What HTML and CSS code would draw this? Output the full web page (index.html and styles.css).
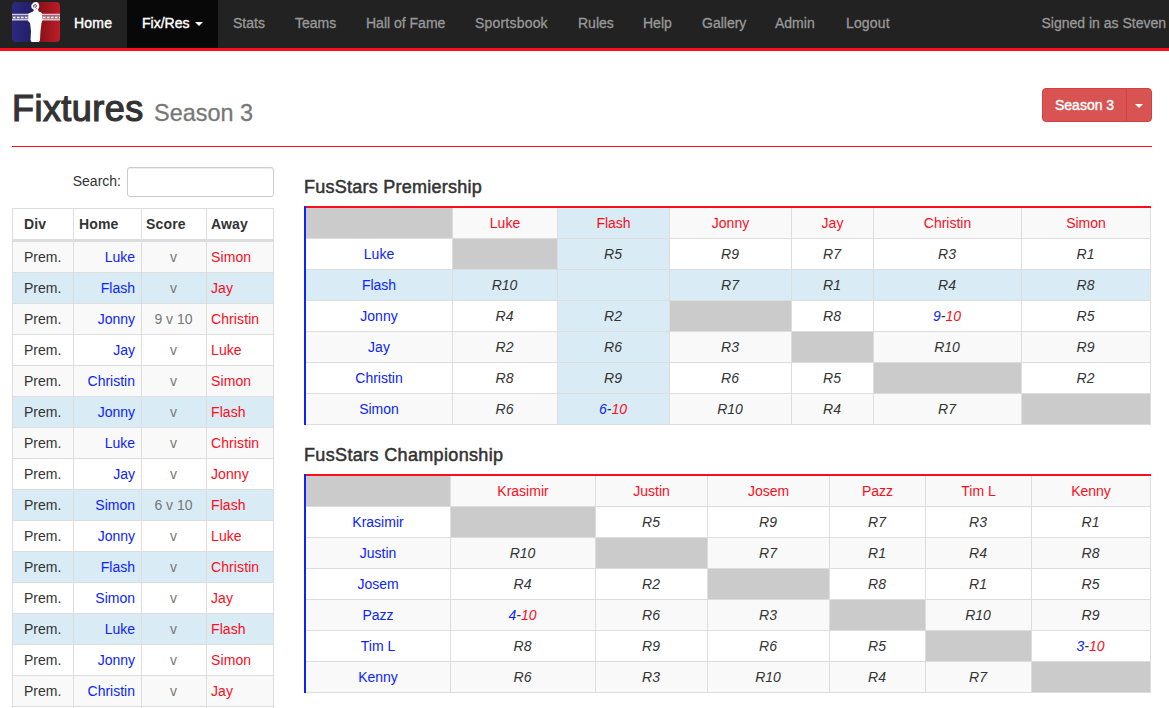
FILE: index.html
```
<!DOCTYPE html>
<html lang="en">
<head>
<meta charset="utf-8">
<title>Fixtures</title>
<link rel="stylesheet" href="styles.css">
</head>
<body>
<nav class="navbar">
  <a class="brand"><svg width="48" height="40" viewBox="0 0 48 40">
    <defs>
      <linearGradient id="b" x1="0" x2="1"><stop offset="0" stop-color="#2c2a80"/><stop offset="1" stop-color="#211c5e"/></linearGradient>
      <linearGradient id="r" x1="0" x2="1"><stop offset="0" stop-color="#801015"/><stop offset="1" stop-color="#bd1c28"/></linearGradient>
      <clipPath id="c"><rect width="48" height="40" rx="4"/></clipPath>
    </defs>
    <g clip-path="url(#c)">
      <rect width="24" height="40" fill="url(#b)"/><rect x="24" width="24" height="40" fill="url(#r)"/>
      <path d="M0 12.5H48M0 17.700H48" stroke="#d3c6da" stroke-width="1.400"/>
      <path d="M0 13.200H20V17H0Z" fill="#6b689f"/><path d="M28 13.200H48V17H28Z" fill="#bd6b74"/>
      <path d="M1 15.500H18M31 15.500H48" stroke="#fff" stroke-width="1.500" stroke-dasharray="2.500 1.500"/>
      <path d="M19.500 40L18.500 38 19 29 18 21 16 19 16.500 11.500 21 9.500 22 8 19.500 6 19.300 3 21.500 .5 25 0 27 2 27.300 5 26 7.500 26.500 9.200 30 11 30.500 18 29.500 21 28.500 29 28 38 27 40Z" fill="#fff"/>
      <path d="M22 5.500L21.500 3.500 23.500 2.500 24.500 4 23.500 5.500 24.500 6.500" stroke="#44305f" stroke-width="1" fill="none"/>
    </g></svg></a>
  <a class="item home">Home</a>
  <a class="item active">Fix/Res<span class="caret"></span></a>
  <a class="item stats">Stats</a>
  <a class="item teams">Teams</a>
  <a class="item fame">Hall of Fame</a>
  <a class="item book">Sportsbook</a>
  <a class="item rules">Rules</a>
  <a class="item help">Help</a>
  <a class="item gallery">Gallery</a>
  <a class="item admin">Admin</a>
  <a class="item logout">Logout</a>
  <span class="signed">Signed in as Steven</span>
</nav>
<main class="page">
  <header class="page-header">
    <h1>Fixtures <small>Season 3</small></h1>
    <div class="btn-group"><span class="btn">Season 3</span><span class="btn toggle"><span class="caret"></span></span></div>
  </header>
  <div class="columns">
    <section class="list">
      <div class="filter"><label for="q">Search:</label><input id="q" type="text"></div>
      <table class="fixtures">
        <colgroup><col class="w-div"><col class="w-home"><col class="w-score"><col class="w-away"></colgroup>
        <thead><tr><th>Div</th><th>Home</th><th>Score</th><th>Away</th></tr></thead>
        <tbody>
          <tr><td>Prem.</td><td>Luke</td><td>v</td><td>Simon</td></tr>
          <tr class="info"><td>Prem.</td><td>Flash</td><td>v</td><td>Jay</td></tr>
          <tr><td>Prem.</td><td>Jonny</td><td>9 v 10</td><td>Christin</td></tr>
          <tr><td>Prem.</td><td>Jay</td><td>v</td><td>Luke</td></tr>
          <tr><td>Prem.</td><td>Christin</td><td>v</td><td>Simon</td></tr>
          <tr class="info"><td>Prem.</td><td>Jonny</td><td>v</td><td>Flash</td></tr>
          <tr><td>Prem.</td><td>Luke</td><td>v</td><td>Christin</td></tr>
          <tr><td>Prem.</td><td>Jay</td><td>v</td><td>Jonny</td></tr>
          <tr class="info"><td>Prem.</td><td>Simon</td><td>6 v 10</td><td>Flash</td></tr>
          <tr><td>Prem.</td><td>Jonny</td><td>v</td><td>Luke</td></tr>
          <tr class="info"><td>Prem.</td><td>Flash</td><td>v</td><td>Christin</td></tr>
          <tr><td>Prem.</td><td>Simon</td><td>v</td><td>Jay</td></tr>
          <tr class="info"><td>Prem.</td><td>Luke</td><td>v</td><td>Flash</td></tr>
          <tr><td>Prem.</td><td>Jonny</td><td>v</td><td>Simon</td></tr>
          <tr><td>Prem.</td><td>Christin</td><td>v</td><td>Jay</td></tr>
          <tr><td></td><td></td><td></td><td></td></tr>
        </tbody>
      </table>
    </section>
    <section class="grids">
      <h4>FusStars Premiership</h4>
      <table class="matrix premiership">
        <colgroup><col class="p0"><col class="p1"><col class="p2"><col class="p3"><col class="p4"><col class="p5"><col class="p6"></colgroup>
        <tbody>
          <tr><th class="x"></th><th>Luke</th><th class="hl">Flash</th><th>Jonny</th><th>Jay</th><th>Christin</th><th>Simon</th></tr>
          <tr><th>Luke</th><td class="x"></td><td class="hl">R5</td><td>R9</td><td>R7</td><td>R3</td><td>R1</td></tr>
          <tr class="info"><th>Flash</th><td>R10</td><td></td><td>R7</td><td>R1</td><td>R4</td><td>R8</td></tr>
          <tr><th>Jonny</th><td>R4</td><td class="hl">R2</td><td class="x"></td><td>R8</td><td><b>9</b>-<i>10</i></td><td>R5</td></tr>
          <tr><th>Jay</th><td>R2</td><td class="hl">R6</td><td>R3</td><td class="x"></td><td>R10</td><td>R9</td></tr>
          <tr><th>Christin</th><td>R8</td><td class="hl">R9</td><td>R6</td><td>R5</td><td class="x"></td><td>R2</td></tr>
          <tr><th>Simon</th><td>R6</td><td class="hl"><b>6</b>-<i>10</i></td><td>R10</td><td>R4</td><td>R7</td><td class="x"></td></tr>
        </tbody>
      </table>
      <h4 class="wide">FusStars Championship</h4>
      <table class="matrix championship">
        <colgroup><col class="c0"><col class="c1"><col class="c2"><col class="c3"><col class="c4"><col class="c5"><col class="c6"></colgroup>
        <tbody>
          <tr><th class="x"></th><th>Krasimir</th><th>Justin</th><th>Josem</th><th>Pazz</th><th>Tim L</th><th>Kenny</th></tr>
          <tr><th>Krasimir</th><td class="x"></td><td>R5</td><td>R9</td><td>R7</td><td>R3</td><td>R1</td></tr>
          <tr><th>Justin</th><td>R10</td><td class="x"></td><td>R7</td><td>R1</td><td>R4</td><td>R8</td></tr>
          <tr><th>Josem</th><td>R4</td><td>R2</td><td class="x"></td><td>R8</td><td>R1</td><td>R5</td></tr>
          <tr><th>Pazz</th><td><b>4</b>-<i>10</i></td><td>R6</td><td>R3</td><td class="x"></td><td>R10</td><td>R9</td></tr>
          <tr><th>Tim L</th><td>R8</td><td>R9</td><td>R6</td><td>R5</td><td class="x"></td><td><b>3</b>-<i>10</i></td></tr>
          <tr><th>Kenny</th><td>R6</td><td>R3</td><td>R10</td><td>R4</td><td>R7</td><td class="x"></td></tr>
        </tbody>
      </table>
    </section>
  </div>
</main>
</body>
</html>
```
FILE: styles.css
```
* { box-sizing: border-box; }
html { overflow: hidden; }
body {
  margin: 0;
  height: 708px;
  overflow: hidden;
  background: #fff;
  color: #333;
  font: 14px/20px "Liberation Sans", Arial, sans-serif;
}
.navbar {
  display: flex;
  height: 51px;
  padding-left: 12px;
  background: #222;
  border-bottom: 3px solid #fc0d1b;
  color: #999;
  white-space: nowrap;
}
.brand { width: 47px; padding-top: 2px; }
.brand svg { display: block; }
.item { flex: none; padding: 13px 0 0 15px; -webkit-text-stroke: .3px; }
.home { width: 68px; color: #fff; }
.active { width: 91px; color: #fff; background: #080808; }
.stats { width: 62px; }
.teams { width: 71px; }
.fame { width: 109px; }
.book { width: 103px; letter-spacing: .2px; }
.rules { width: 65px; }
.help { width: 59px; }
.gallery { width: 73px; }
.admin { width: 71px; }
.logout { width: 74px; letter-spacing: .15px; }
.home, .active { -webkit-text-stroke: .4px; }
.home { letter-spacing: .2px; }
.signed { margin-left: auto; padding: 13px 3px 0 0; -webkit-text-stroke: .3px; }
.caret {
  display: inline-block;
  width: 0;
  margin-left: 6px;
  vertical-align: middle;
  border-top: 4px solid #fff;
  border-left: 4px solid transparent;
  border-right: 4px solid transparent;
}
.page { padding: 0 17px 0 12px; }
.page-header {
  display: flex;
  justify-content: space-between;
  height: 96px;
  padding-top: 37px;
  border-bottom: 1px solid #fc0d1b;
}
h1 {
  margin: 1px 0 0;
  font-size: 36px;
  line-height: 40px;
  font-weight: 400;
  letter-spacing: .45px;
  -webkit-text-stroke: 1.2px;
}
h1 small { font-size: 23.4px; color: #777; letter-spacing: 0; -webkit-text-stroke: .3px; }
.btn-group { display: flex; height: 34px; color: #fff; }
.btn {
  width: 85px;
  padding: 6px 0 0 12px;
  background: #d75452;
  border: 1px solid #d2403f;
  border-radius: 4px 0 0 4px;
  -webkit-text-stroke: .4px;
}
.toggle { width: 26px; margin-left: -1px; padding: 6px 0 0 8px; border-radius: 0 4px 4px 0; }
.toggle .caret { display: block; margin: 9px 0 0; }
.columns { display: flex; gap: 30px; }
.list { width: 262px; flex: none; padding-top: 20px; }
.filter { display: flex; justify-content: flex-end; height: 41px; }
.filter label { padding: 4px 6px 0 0; }
.filter input {
  width: 147px;
  height: 30px;
  border: 1px solid #ccc;
  border-radius: 3px;
  box-shadow: inset 0 1px 1px rgba(0, 0, 0, .075);
}
table { table-layout: fixed; border-spacing: 0; border-collapse: separate; }
td, th { height: 31px; padding: 0 5px; border: solid #ddd; border-width: 0 1px 1px 0; line-height: 20px; white-space: nowrap; }
.fixtures { width: 262px; border-top: 1px solid #ddd; border-left: 1px solid #ddd; }
.w-div { width: 61px; }
.w-home { width: 68px; }
.w-score { width: 65px; }
.w-away { width: 67px; }
.fixtures th { height: 33px; border-bottom-width: 3px; text-align: left; padding-left: 5px; letter-spacing: .15px; }
.fixtures th:first-child, .fixtures td:first-child { padding-left: 11px; }
.fixtures tbody tr:nth-child(odd), .matrix tr:nth-child(odd) { background: #f9f9f9; }
.fixtures td:nth-child(2) { text-align: right; color: #0b24fb; padding-right: 6px; }
.fixtures td:nth-child(3) { text-align: center; color: #777; padding-right: 6px; }
.fixtures td:nth-child(4) { color: #fc0d1b; padding-left: 4px; letter-spacing: .1px; }
.fixtures th:nth-child(3), .fixtures th:nth-child(4) { padding-left: 4px; }
.fixtures tbody tr.info, .matrix tr.info, .matrix .hl { background: #d9ebf5; }
.grids { width: 847px; flex: none; }
h4 { margin: 30px 0 9px; font-size: 18px; line-height: 20px; font-weight: 400; letter-spacing: .25px; -webkit-text-stroke: .5px; }
.matrix + h4 { margin: 20px 0 9px; letter-spacing: .35px; }
.matrix {
  width: 847px;
  padding: 2px 0 0 2px;
  background:
    linear-gradient(#0b24fb, #0b24fb) 0 0 / 2px 100% no-repeat,
    linear-gradient(#fc0d1b, #fc0d1b) 0 0 / 100% 2px no-repeat;
}
.matrix td, .matrix th { text-align: center; font-weight: 400; }
.matrix td { font-style: italic; padding-right: 6px; }
.matrix th { color: #0b24fb; }
.matrix tr:first-child th { color: #fc0d1b; }
.matrix .x { background: #cbcbcb; }
.matrix b { font-weight: 400; color: #0b24fb; }
.matrix i { color: #fc0d1b; }
.p0 { width: 147px; }
.p1 { width: 105px; }
.p2 { width: 112px; }
.p3 { width: 122px; }
.p4 { width: 82px; }
.p5 { width: 148px; }
.p6 { width: 129px; }
.c0 { width: 145px; }
.c1 { width: 145px; }
.c2 { width: 112px; }
.c3 { width: 122px; }
.c4 { width: 96px; }
.c5 { width: 106px; }
.c6 { width: 119px; }
```
